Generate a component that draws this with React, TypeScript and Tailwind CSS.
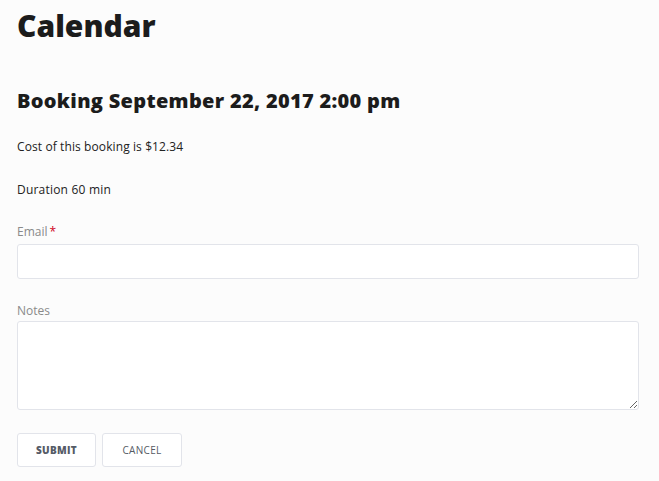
export default function App() {
  return (
    <div className="min-h-[481px] bg-[#fcfcfc] px-[17px] pt-[8px] text-[#222] font-['Open_Sans',sans-serif]">
      <h1 className="text-[30px] font-extrabold leading-[36px] text-[#1c1c1c]">Calendar</h1>

      <h2 className="mt-[44px] text-[20px] font-extrabold leading-[26px] tracking-[0.3px] text-[#1c1c1c]">
        Booking September 22, 2017 2:00 pm
      </h2>

      <p className="mt-[25px] text-[12px] leading-[16px] tracking-[0.1px]">Cost of this booking is $12.34</p>
      <p className="mt-[27px] text-[12px] leading-[16px] tracking-[0.2px]">Duration 60 min</p>

      <form className="mt-[26px] flex flex-col">
        <label className="text-[12px] leading-[16px] text-[#8a8a8a]">
          Email<span className="ml-[2px] text-[#d0021b]">*</span>
        </label>
        <input
          type="email"
          className="mt-[4px] h-[35px] w-[622px] rounded-[3px] border border-[#e2e4ea] bg-white"
        />

        <label className="mt-[24px] text-[12px] leading-[16px] text-[#8a8a8a]">Notes</label>
        <textarea className="mt-[2px] h-[89px] w-[622px] rounded-[3px] border border-[#e2e4ea] bg-white" />

        <div className="mt-[23px] flex gap-[6px]">
          <button
            type="button"
            className="h-[34px] w-[79px] rounded-[3px] border border-[#e2e4ea] bg-white text-[10px] font-extrabold tracking-[0.3px] text-[#555b66]"
          >
            SUBMIT
          </button>
          <button
            type="button"
            className="h-[34px] w-[80px] rounded-[3px] border border-[#e2e4ea] bg-white text-[10px] tracking-[0.3px] text-[#555b66]"
          >
            CANCEL
          </button>
        </div>
      </form>
    </div>
  );
}
